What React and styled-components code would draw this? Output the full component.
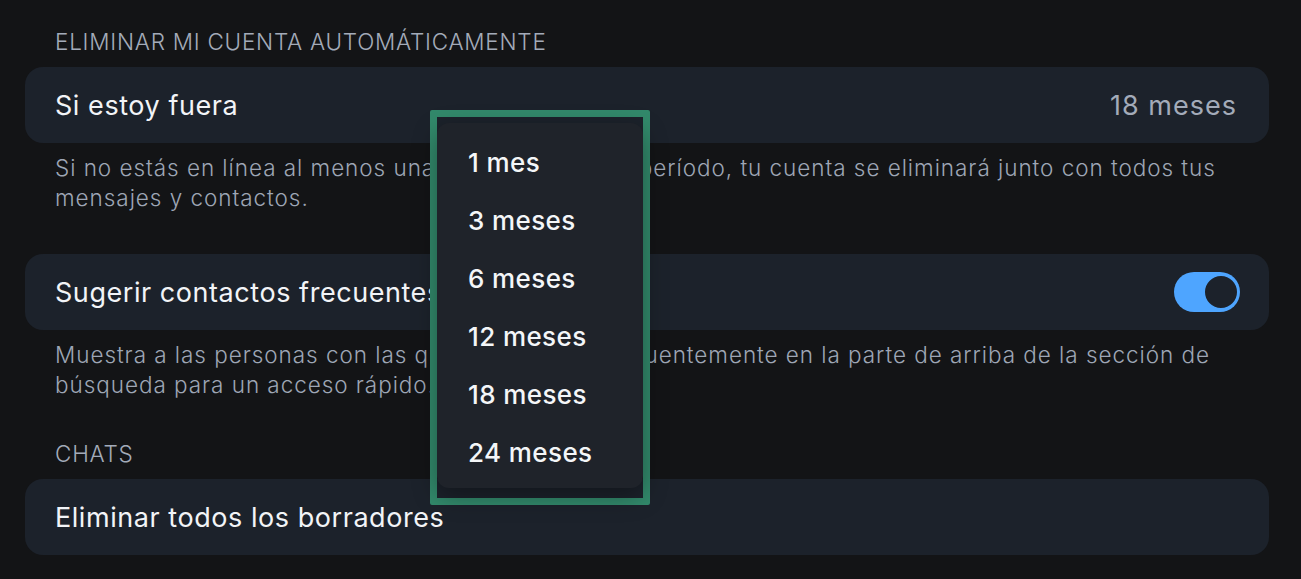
import React, { useState } from "react";
import styled, { createGlobalStyle } from "styled-components";

const GlobalStyle = createGlobalStyle`
  html, body {
    margin: 0;
    background: #131416;
  }
  body {
    font-family: Inter, "Noto Sans", sans-serif;
    -webkit-font-smoothing: antialiased;
  }
`;

const Page = styled.div`
  position: relative;
  padding: 27px 32px 24px 25px;
  min-height: 579px;
  box-sizing: border-box;
  background: #131416;
`;

const SectionLabel = styled.div`
  padding-left: 30px;
  margin-bottom: 10px;
  font-size: 22.5px;
  line-height: 30px;
  font-weight: 300;
  letter-spacing: 0.75px;
  color: #a3abb9;
  margin-top: ${(p) => (p.$first ? "0" : "39px")};
`;

const Card = styled.div`
  display: flex;
  align-items: center;
  justify-content: space-between;
  height: 76px;
  padding: 0 30px;
  border-radius: 18px;
  background: #1c222b;
  margin-top: ${(p) => p.$gap || "0"};
`;

const Title = styled.span`
  font-size: 27px;
  font-weight: 400;
  letter-spacing: 0.55px;
  color: #f2f4f7;
`;

const Value = styled.span`
  font-size: 27px;
  font-weight: 400;
  letter-spacing: 1px;
  color: #a3abb9;
  margin-right: 2px;
`;

const Note = styled.p`
  margin: 0;
  padding: 10px 30px 0 30px;
  font-size: 22.5px;
  line-height: 30px;
  font-weight: 300;
  letter-spacing: 0.95px;
  color: #9ea6b5;
`;

const Toggle = styled.div`
  position: relative;
  width: 66px;
  height: 40px;
  border-radius: 20px;
  background: #4ea5ff;
  margin-right: -1px;

  &::after {
    content: "";
    position: absolute;
    right: 1px;
    top: 2px;
    width: 32px;
    height: 32px;
    border-radius: 50%;
    background: #1c222b;
    border: 2px solid #4ea5ff;
  }
`;

const Highlight = styled.div`
  position: absolute;
  left: 430px;
  top: 110px;
  width: 220px;
  height: 395px;
  box-sizing: border-box;
  border: 7px solid #32896b;
  border-radius: 2px;
`;

const Menu = styled.ul`
  list-style: none;
  margin: 6px 0 0 0;
  padding: 10px 0 7px 0;
  width: 206px;
  border-radius: 12px;
  background: #1f232a;
  box-shadow: 0 8px 24px rgba(0, 0, 0, 0.35);
`;

const MenuItem = styled.li`
  height: 58px;
  display: flex;
  align-items: center;
  padding-left: 31px;
  font-size: 26px;
  font-weight: 500;
  letter-spacing: 0.4px;
  color: #f4f6f8;
`;

const options = ["1 mes", "3 meses", "6 meses", "12 meses", "18 meses", "24 meses"];

const App = () => {
  const [suggest] = useState(true);

  return (
    <Page>
      <GlobalStyle />
      <SectionLabel $first>ELIMINAR MI CUENTA AUTOMÁTICAMENTE</SectionLabel>
      <Card>
        <Title>Si estoy fuera</Title>
        <Value>18 meses</Value>
      </Card>
      <Note>
        Si no estás en línea al menos una vez durante este período, tu cuenta se eliminará junto con todos tus
        <br />
        mensajes y contactos.
      </Note>

      <Card $gap="41px">
        <Title>Sugerir contactos frecuentes</Title>
        {suggest && <Toggle />}
      </Card>
      <Note>
        Muestra a las personas con las que hablas más frecuentemente en la parte de arriba de la sección de
        <br />
        búsqueda para un acceso rápido.
      </Note>

      <SectionLabel>CHATS</SectionLabel>
      <Card>
        <Title>Eliminar todos los borradores</Title>
      </Card>

      <Highlight>
        <Menu>
          {options.map((item) => (
            <MenuItem key={item}>{item}</MenuItem>
          ))}
        </Menu>
      </Highlight>
    </Page>
  );
};

export default App;
